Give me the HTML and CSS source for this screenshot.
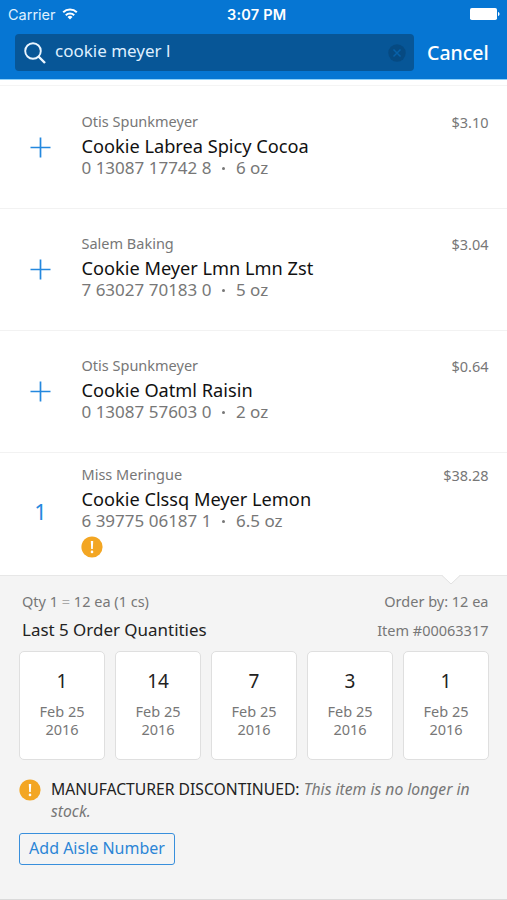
FILE: index.html
```html
<!DOCTYPE html>
<html lang="en">
<head>
<meta charset="utf-8">
<title>Order search</title>
<link rel="stylesheet" href="styles.css">
</head>
<body>
<svg class="defs" width="0" height="0" aria-hidden="true">
  <symbol id="plus" viewBox="0 0 22 22"><path d="M10.5 .5v20M.5 10.5h20" fill="none" stroke="#2488de" stroke-width="1.7"/></symbol>
  <symbol id="alert" viewBox="0 0 22 22"><circle cx="11" cy="11" r="10.6" fill="#f3a623"/><path d="M9.8 5h2.4l-.4 8h-1.6z" fill="#fff"/><circle cx="11" cy="15.9" r="1.3" fill="#fff"/></symbol>
</svg>
<header class="header">
  <div class="status">
    <div class="carrier"><span class="carrier-name">Carrier</span>
      <svg class="wifi" viewBox="0 0 16 12"><g fill="none" stroke="#fff" stroke-width="2"><path d="M1.2 4.3a9.7 9.7 0 0 1 13.6 0"/><path d="M3.8 7.2a6 6 0 0 1 8.400 0"/></g><path d="M8 11.6 5.5 9.1a3.5 3.5 0 0 1 5 0z" fill="#fff"/></svg>
    </div>
    <span class="clock">3:07 PM</span>
    <svg class="battery" viewBox="0 0 30 12"><rect width="27" height="12" rx="1.8" fill="#fff"/><path d="M28 4c2 .4 2 3.600 0 4z" fill="#fff"/></svg>
  </div>
  <div class="searchbar">
    <div class="field">
      <svg class="glass" viewBox="0 0 22 22"><g fill="none" stroke="#e9f5ff" stroke-width="1.9"><circle cx="9" cy="9" r="7.8"/><path d="m14.500 14.500 6.500 6.500" stroke-width="2.400"/></g></svg>
      <span class="query">cookie meyer l</span>
      <svg class="clear" viewBox="0 0 18 18"><circle cx="9" cy="9" r="8.700" fill="#064a82"/><path d="m5.500 5.500 7 7m0-7-7 7" stroke="#0861a8" stroke-width="1.500"/></svg>
    </div>
    <span class="cancel">Cancel</span>
  </div>
</header>
<main>
  <section class="item">
    <div class="action"><svg class="plus"><use href="#plus" width="22" height="22"/></svg></div>
    <div class="info"><div class="brand">Otis Spunkmeyer</div><div class="name">Cookie Labrea Spicy Cocoa</div><div class="code"><span class="upc">0 13087 17742 8</span><i class="dot"></i><span>6 oz</span></div></div>
    <div class="price">$3.10</div>
  </section>
  <section class="item">
    <div class="action"><svg class="plus"><use href="#plus" width="22" height="22"/></svg></div>
    <div class="info"><div class="brand">Salem Baking</div><div class="name">Cookie Meyer Lmn Lmn Zst</div><div class="code"><span class="upc">7 63027 70183 0</span><i class="dot"></i><span>5 oz</span></div></div>
    <div class="price">$3.04</div>
  </section>
  <section class="item">
    <div class="action"><svg class="plus"><use href="#plus" width="22" height="22"/></svg></div>
    <div class="info"><div class="brand">Otis Spunkmeyer</div><div class="name">Cookie Oatml Raisin</div><div class="code"><span class="upc">0 13087 57603 0</span><i class="dot"></i><span>2 oz</span></div></div>
    <div class="price">$0.64</div>
  </section>
  <section class="item selected">
    <div class="action"><span class="count">1</span></div>
    <div class="info"><div class="brand">Miss Meringue</div><div class="name">Cookie Clssq Meyer Lemon</div><div class="code"><span class="upc">6 39775 06187 1</span><i class="dot"></i><span>6.5 oz</span></div><svg class="alert"><use href="#alert"/></svg></div>
    <div class="price">$38.28</div>
  </section>
  <section class="details">
    <svg class="notch" viewBox="0 0 18 10"><path d="M0 0h18L9 8.500z" fill="#fff"/><path d="m0 .5 9 8.500 9-8.500" fill="none" stroke="#e2e2e2"/></svg>
    <div class="line meta"><span>Qty 1 <span class="eq">=</span> 12 ea (1 cs)</span><span>Order by: 12 ea</span></div>
    <div class="line"><h2 class="heading">Last 5 Order Quantities</h2><span>Item #00063317</span></div>
    <div class="history">
      <div class="card"><b class="qty">1</b><span>Feb 25<br>2016</span></div>
      <div class="card"><b class="qty">14</b><span>Feb 25<br>2016</span></div>
      <div class="card"><b class="qty">7</b><span>Feb 25<br>2016</span></div>
      <div class="card"><b class="qty">3</b><span>Feb 25<br>2016</span></div>
      <div class="card"><b class="qty">1</b><span>Feb 25<br>2016</span></div>
    </div>
    <div class="notice"><svg class="alert"><use href="#alert"/></svg><p class="message"><span class="strong">MANUFACTURER DISCONTINUED:</span> <em>This item is no longer in<br>stock.</em></p></div>
    <button class="aisle">Add Aisle Number</button>
  </section>
</main>
</body>
</html>
```
FILE: styles.css
```css
* { box-sizing: border-box; }
body { margin: 0; width: 507px; height: 900px; overflow: hidden; background: #fff; font-family: "Noto Sans", sans-serif; color: #777; }
svg { display: block; flex: none; }
.defs { position: absolute; }

.header { height: 80px; background: #0676d3; border-bottom: 1px solid #8fd0f8; color: #fff; }
.status { height: 34px; padding: 0 7px 6px 8px; display: grid; grid-template-columns: 219px auto 1fr; align-items: center; font-family: Inter, sans-serif; font-size: 14.5px; }
.carrier { display: flex; align-items: center; gap: 6px; color: #dff0ff; }
.wifi { width: 16px; height: 12px; }
.clock { font-weight: 600; letter-spacing: .2px; }
.battery { width: 30px; height: 12px; justify-self: end; }
.searchbar { display: flex; align-items: center; padding: 0 18px 0 15px; }
.field { width: 399px; height: 37px; padding: 0 8px; display: flex; align-items: center; background: #075697; border-radius: 4px; }
.glass { width: 22px; height: 22px; margin-left: 1px; }
.query { margin: -3px auto 0 9px; font-size: 17px; line-height: 24px; color: #dfefff; }
.clear { width: 18px; height: 18px; }
.cancel { margin-left: 13px; font-size: 19.5px; line-height: 26px; font-weight: 500; }

.item { height: 122px; display: flex; border-bottom: 1px solid #f2f2f2; padding: 23px 18.5px 0 0; }
.item:first-child { margin-top: 5px; height: 124px; padding-top: 24px; border-top: 1px solid #f4f4f4; }
.item.selected { height: 122px; padding-top: 10px; border: 0; }
.action { width: 81.5px; padding: 27px 0 0 30px; }
.plus { width: 22px; height: 22px; }
.count { display: block; width: 21px; margin-top: 7px; text-align: center; font-size: 22px; line-height: 28px; color: #2488de; }
.info { flex: 1; white-space: nowrap; }
.brand { font-size: 14.5px; line-height: 22px; }
.name { margin-top: 2px; font-size: 18.2px; line-height: 24px; color: #111; }
.code { display: flex; align-items: center; margin-top: -1px; font-size: 17px; line-height: 22px; }
.dot { width: 3px; height: 3px; margin: 0 10.5px 0 11px; border-radius: 50%; background: #777; }
.price { padding-top: 1px; font-size: 14.5px; line-height: 22px; }
.alert { width: 22px; height: 22px; }
.info .alert { margin-top: 4px; margin-left: -.5px; }

.details { position: relative; height: 325px; padding: 14px 18.5px 0 19px; background: #f4f4f4; border-top: 1px solid #e7e7e7; border-bottom: 1px solid #dadada; font-size: 14.5px; }
.notch { position: absolute; top: -1px; left: 442px; width: 18px; height: 10px; }
.line { display: flex; justify-content: space-between; align-items: center; height: 28px; padding-left: 3px; line-height: 22px; }
.meta { height: 22px; margin-bottom: 4px; }
.eq { color: #aaa; }
.heading { margin: 0; font-size: 16.95px; line-height: 24px; font-weight: 400; color: #222; }
.history { display: grid; grid-template-columns: repeat(5, 86px); gap: 10px; margin-top: 7px; }
.card { height: 109px; padding-top: 15px; display: flex; flex-direction: column; align-items: center; text-align: center; line-height: 18px; background: #fff; border: 1px solid #dfdfdf; border-radius: 5px; }
.qty { margin-bottom: 7px; font-size: 19px; line-height: 28px; font-weight: 400; color: #222; }
.notice { display: flex; margin-top: 19px; }
.message { margin: -1px 0 0 10px; font-size: 15.7px; line-height: 22px; white-space: nowrap; }
.strong { color: #222; }
.aisle { display: block; width: 156px; height: 32px; margin-top: 11px; padding: 0 0 3px; border: 1.5px solid #388fdc; border-radius: 3px; background: none; font: 16px/26px "Noto Sans", sans-serif; color: #2b85d6; white-space: nowrap; }
```
